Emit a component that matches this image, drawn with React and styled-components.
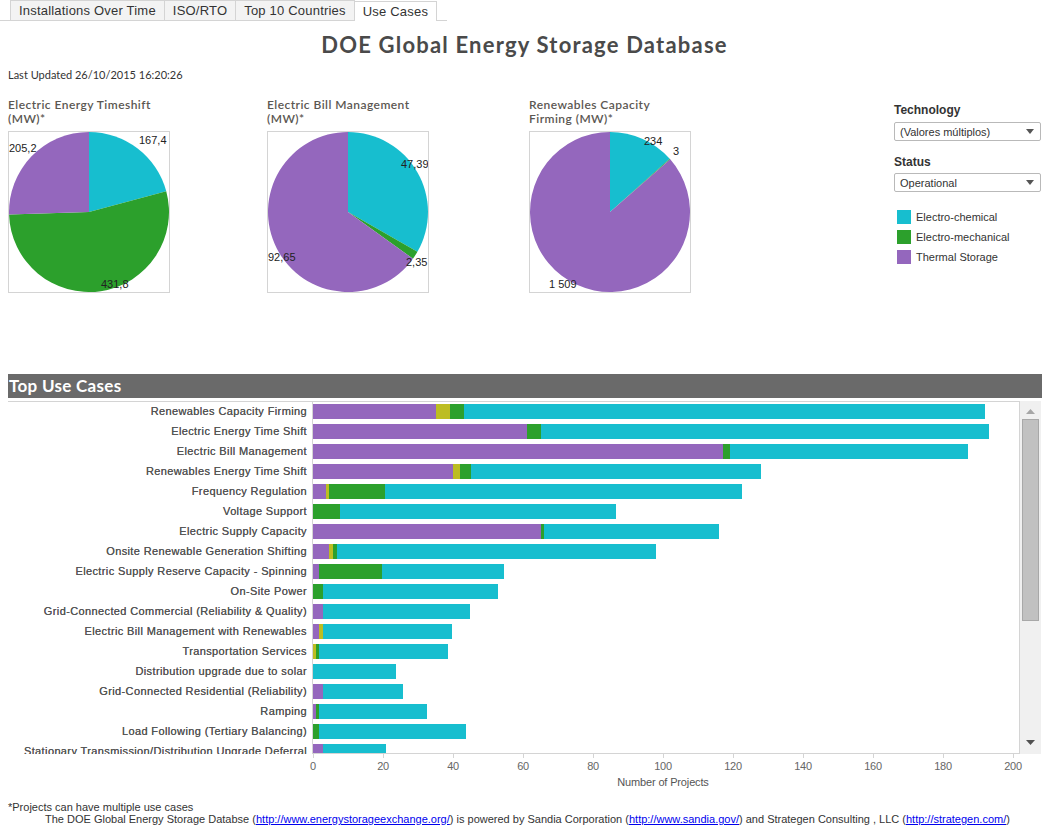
import React from 'react';
import styled, { createGlobalStyle } from 'styled-components';

const colors = {
  chemical: '#17becf',
  mechanical: '#2ca02c',
  thermal: '#9467bd',
  other: '#bcbd22',
  border: '#d4d4d4',
};

const PX_PER_PROJECT = 3.5;

// purple, olive, green, cyan counts per use case
const useCases = [
  ['Renewables Capacity Firming', 35, 4, 4, 149],
  ['Electric Energy Time Shift', 61, 0, 4, 128],
  ['Electric Bill Management', 117, 0, 2, 68],
  ['Renewables Energy Time Shift', 40, 2, 3, 83],
  ['Frequency Regulation', 3.7, 1, 16, 102],
  ['Voltage Support', 0, 0, 7.7, 79],
  ['Electric Supply Capacity', 65, 0, 1, 50],
  ['Onsite Renewable Generation Shifting', 4.7, 1, 1.3, 91],
  ['Electric Supply Reserve Capacity - Spinning', 1.7, 0, 18, 35],
  ['On-Site Power', 0, 0, 2.8, 50],
  ['Grid-Connected Commercial (Reliability & Quality)', 2.8, 0, 0, 42],
  ['Electric Bill Management with Renewables', 1.7, 1.1, 0, 37],
  ['Transportation Services', 0, 0.9, 0.8, 37],
  ['Distribution upgrade due to solar', 0, 0, 0, 23.7],
  ['Grid-Connected Residential (Reliability)', 2.8, 0, 0, 23],
  ['Ramping', 0.8, 0, 0.9, 31],
  ['Load Following (Tertiary Balancing)', 0, 0, 1.7, 42],
  ['Stationary Transmission/Distribution Upgrade Deferral', 2.8, 0, 0, 18],
];

const pies = [
  {
    title: ['Electric Energy Timeshift', '(MW)*'],
    width: 259,
    values: [167.4, 431.8, 205.2],
    labels: [
      { text: '167,4', x: 130, y: 12 },
      { text: '431,8', x: 92, y: 156 },
      { text: '205,2', x: 0, y: 20 },
    ],
  },
  {
    title: ['Electric Bill Management', '(MW)*'],
    width: 262,
    values: [47.39, 2.35, 92.65],
    labels: [
      { text: '47,39', x: 133, y: 36 },
      { text: '2,35', x: 138, y: 134 },
      { text: '92,65', x: 0, y: 129 },
    ],
  },
  {
    title: ['Renewables Capacity', 'Firming (MW)*'],
    width: 365,
    values: [234, 3, 1509],
    labels: [
      { text: '234', x: 114, y: 13 },
      { text: '3', x: 143, y: 23 },
      { text: '1 509', x: 19, y: 156 },
    ],
  },
];

const GlobalStyle = createGlobalStyle`
  html, body {
    margin: 0;
    padding: 0;
    background: #fff;
  }
  body {
    font-family: 'Liberation Sans', Arial, sans-serif;
    color: #333;
  }
`;

const Page = styled.div`
  width: 1049px;
  height: 836px;
  overflow: hidden;
`;

const TabBar = styled.div`
  display: flex;
  align-items: flex-end;
  width: 447px;
  height: 21px;
  padding-left: 10px;
  box-sizing: border-box;
  border-bottom: 1px solid ${colors.border};
`;

const Tab = styled.div`
  height: 20px;
  margin-bottom: ${p => (p.$active ? '-1px' : '0')};
  padding: 0 8px;
  display: flex;
  align-items: center;
  font-size: 13px;
  letter-spacing: 0.2px;
  color: #333;
  background: ${p => (p.$active ? '#fff' : '#f3f3f3')};
  border: 1px solid ${colors.border};
  border-bottom: none;
  border-left: ${p => (p.$first ? `1px solid ${colors.border}` : 'none')};
  box-sizing: border-box;
`;

const Title = styled.h1`
  margin: 11px 0 0;
  text-align: center;
  font-family: Lato, 'Open Sans', sans-serif;
  font-weight: 700;
  font-size: 22px;
  line-height: 26px;
  letter-spacing: 1.2px;
  color: #4a4a4a;
`;

const Updated = styled.div`
  margin: 10px 0 0 8px;
  font-family: Lato, 'Open Sans', sans-serif;
  font-size: 11px;
  line-height: 14px;
  color: #333;
`;

const TopSection = styled.div`
  display: flex;
  height: 278px;
  margin-top: 14px;
  padding: 0 8px;
`;

const PieColumn = styled.div`
  width: ${p => p.$width}px;
  flex: none;
  padding-top: 2px;
`;

const PieTitle = styled.div`
  font-family: Lato, 'Open Sans', sans-serif;
  font-weight: 600;
  font-size: 12px;
  line-height: 14px;
  letter-spacing: 0.45px;
  color: #5b5752;
`;

const PieBox = styled.div`
  width: 160px;
  height: 160px;
  margin-top: 5px;
  border: 1px solid ${colors.border};
  box-sizing: content-box;
`;

const SidePanel = styled.div`
  width: 147px;
  flex: none;
  display: flex;
  flex-direction: column;
  padding-top: 7px;
`;

const FilterLabel = styled.div`
  font-size: 12px;
  font-weight: 700;
  line-height: 14px;
  color: #333;
  margin-top: ${p => p.$top || 0}px;
`;

const Dropdown = styled.div`
  height: 19px;
  margin-top: ${p => p.$top}px;
  border: 1px solid #b9b9b9;
  border-radius: 2px;
  box-sizing: border-box;
  display: flex;
  align-items: center;
  justify-content: space-between;
  padding: 0 6px 0 5px;
  font-size: 11px;
  color: #333;
`;

const Legend = styled.div`
  margin-top: 18px;
  display: flex;
  flex-direction: column;
  gap: 6px;
  padding-left: 3px;
`;

const LegendItem = styled.div`
  display: flex;
  align-items: center;
  gap: 5px;
  height: 14px;
  font-size: 11px;
  color: #333;
`;

const Swatch = styled.span`
  width: 14px;
  height: 14px;
  background: ${p => p.$color};
`;

const SectionHeader = styled.div`
  margin: 0 7px 0 8px;
  height: 24px;
  background: #6a6a6a;
  color: #fff;
  font-family: Lato, 'Open Sans', sans-serif;
  font-weight: 700;
  font-size: 17px;
  line-height: 24px;
  letter-spacing: 0.3px;
  padding-left: 1px;
`;

const ChartFrame = styled.div`
  display: flex;
  margin: 3px 7px 0 8px;
  height: 353px;
`;

const LabelColumn = styled.div`
  width: 304px;
  flex: none;
  overflow: hidden;
  border-top: 1px solid ${colors.border};
  box-sizing: border-box;
  padding-top: 2px;
`;

const RowLabel = styled.div`
  height: 20px;
  line-height: 15px;
  text-align: right;
  padding-right: 5px;
  font-size: 11px;
  letter-spacing: 0.38px;
  color: #555;
  white-space: nowrap;
  text-shadow: 0 0 0.5px #555;
`;

const PlotColumn = styled.div`
  width: 708px;
  flex: none;
  overflow: hidden;
  box-sizing: border-box;
  border: 1px solid ${colors.border};
  padding-top: 2px;
`;

const BarRow = styled.div`
  height: 20px;
`;

const Bar = styled.div`
  display: flex;
  height: 15px;
`;

const Segment = styled.div`
  height: 100%;
  flex: none;
  background: ${p => p.$color};
`;

const Scrollbar = styled.div`
  width: 21px;
  flex: none;
  background: #f0f0f0;
  display: flex;
  flex-direction: column;
  align-items: center;
`;

const ScrollArrow = styled.svg`
  display: block;
  flex: none;
  margin-top: ${p => p.$top}px;
  margin-bottom: ${p => p.$bottom || 0}px;
`;

const Thumb = styled.div`
  width: 17px;
  height: 202px;
  margin-top: 5px;
  background: #c1c1c1;
  border: 1px solid #a8a8a8;
  box-sizing: border-box;
`;

const ScrollSpacer = styled.div`
  flex: 1;
`;

const AxisRow = styled.div`
  display: flex;
  margin-left: ${313 - 35}px;
`;

const Tick = styled.div`
  width: 70px;
  flex: none;
  position: relative;
  text-align: center;
  padding-top: 6px;
  font-size: 11px;
  line-height: 13px;
  color: #666;
  letter-spacing: -0.3px;
  &::before {
    content: '';
    position: absolute;
    top: 0;
    left: 35px;
    width: 1px;
    height: 4px;
    background: ${colors.border};
  }
`;

const AxisTitle = styled.div`
  margin-left: 313px;
  width: 700px;
  text-align: center;
  font-size: 11px;
  line-height: 14px;
  margin-top: 2px;
  color: #555;
  letter-spacing: -0.15px;
`;

const Footer = styled.div`
  margin: 12px 0 0 8px;
  font-size: 11px;
  line-height: 12px;
  color: #333;
`;

const FooterLine = styled.div`
  padding-left: ${p => p.$indent || 0}px;
  white-space: nowrap;
`;

const Link = styled.a`
  color: #0000ee;
  text-decoration: underline;
`;

function slicePath(cx, cy, r, a0, a1) {
  const pt = a => [cx + r * Math.sin(a), cy - r * Math.cos(a)];
  const [x0, y0] = pt(a0);
  const [x1, y1] = pt(a1);
  const large = a1 - a0 > Math.PI ? 1 : 0;
  return `M${cx},${cy} L${x0},${y0} A${r},${r} 0 ${large} 1 ${x1},${y1} Z`;
}

const sliceColors = [colors.chemical, colors.mechanical, colors.thermal];

function Pie({ values, labels }) {
  const total = values.reduce((a, b) => a + b, 0);
  let angle = 0;
  const slices = values.map((v, i) => {
    const a0 = angle;
    angle += (v / total) * Math.PI * 2;
    return <path key={i} d={slicePath(80, 80, 80, a0, angle)} fill={sliceColors[i]} />;
  });
  return (
    <svg width="160" height="160" viewBox="0 0 160 160">
      {slices}
      {labels.map(l => (
        <text
          key={l.text}
          x={l.x}
          y={l.y}
          fontSize="11"
          fontFamily="'Liberation Sans', Arial, sans-serif"
          fill="#222"
        >
          {l.text}
        </text>
      ))}
    </svg>
  );
}

function Caret() {
  return (
    <svg width="8" height="5" viewBox="0 0 8 5">
      <path d="M0,0 L8,0 L4,5 Z" fill="#555" />
    </svg>
  );
}

const segColors = [colors.thermal, colors.other, colors.mechanical, colors.chemical];

export default function App() {
  const ticks = [0, 20, 40, 60, 80, 100, 120, 140, 160, 180, 200];
  return (
    <Page>
      <GlobalStyle />
      <TabBar>
        <Tab $first>Installations Over Time</Tab>
        <Tab>ISO/RTO</Tab>
        <Tab>Top 10 Countries</Tab>
        <Tab $active>Use Cases</Tab>
      </TabBar>
      <Title>DOE Global Energy Storage Database</Title>
      <Updated>Last Updated 26/10/2015 16:20:26</Updated>
      <TopSection>
        {pies.map(p => (
          <PieColumn key={p.title[0]} $width={p.width}>
            <PieTitle>
              {p.title[0]}
              <br />
              {p.title[1]}
            </PieTitle>
            <PieBox>
              <Pie values={p.values} labels={p.labels} />
            </PieBox>
          </PieColumn>
        ))}
        <SidePanel>
          <FilterLabel>Technology</FilterLabel>
          <Dropdown $top={5}>
            <span>(Valores múltiplos)</span>
            <Caret />
          </Dropdown>
          <FilterLabel $top={14}>Status</FilterLabel>
          <Dropdown $top={4}>
            <span>Operational</span>
            <Caret />
          </Dropdown>
          <Legend>
            <LegendItem>
              <Swatch $color={colors.chemical} />
              Electro-chemical
            </LegendItem>
            <LegendItem>
              <Swatch $color={colors.mechanical} />
              Electro-mechanical
            </LegendItem>
            <LegendItem>
              <Swatch $color={colors.thermal} />
              Thermal Storage
            </LegendItem>
          </Legend>
        </SidePanel>
      </TopSection>
      <SectionHeader>Top Use Cases</SectionHeader>
      <ChartFrame>
        <LabelColumn>
          {useCases.map(u => (
            <RowLabel key={u[0]}>{u[0]}</RowLabel>
          ))}
        </LabelColumn>
        <PlotColumn>
          {useCases.map(u => (
            <BarRow key={u[0]}>
              <Bar>
                {u.slice(1).map((v, i) =>
                  v > 0 ? (
                    <Segment key={i} $color={segColors[i]} style={{ width: v * PX_PER_PROJECT }} />
                  ) : null,
                )}
              </Bar>
            </BarRow>
          ))}
        </PlotColumn>
        <Scrollbar>
          <ScrollArrow $top={8} width="9" height="5" viewBox="0 0 9 5">
            <path d="M0,5 L9,5 L4.5,0 Z" fill="#a6a6a6" />
          </ScrollArrow>
          <Thumb />
          <ScrollSpacer />
          <ScrollArrow $top={0} $bottom={9} width="9" height="5" viewBox="0 0 9 5">
            <path d="M0,0 L9,0 L4.5,5 Z" fill="#505050" />
          </ScrollArrow>
        </Scrollbar>
      </ChartFrame>
      <AxisRow>
        {ticks.map(t => (
          <Tick key={t}>{t}</Tick>
        ))}
      </AxisRow>
      <AxisTitle>Number of Projects</AxisTitle>
      <Footer>
        <FooterLine>*Projects can have multiple use cases</FooterLine>
        <FooterLine $indent={37}>
          The DOE Global Energy Storage Databse (
          <Link href="#">http://www.energystorageexchange.org/</Link>) is powered by Sandia
          Corporation (<Link href="#">http://www.sandia.gov/</Link>) and Strategen Consulting , LLC
          (<Link href="#">http://strategen.com/</Link>)
        </FooterLine>
      </Footer>
    </Page>
  );
}
